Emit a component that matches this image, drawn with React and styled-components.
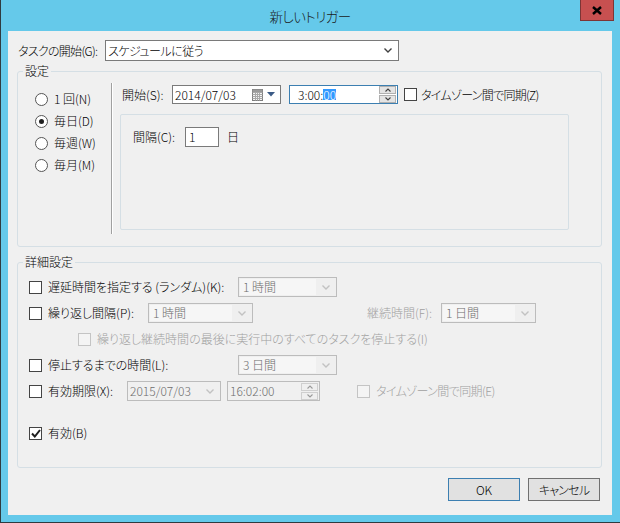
import React from "react";
import styled, { createGlobalStyle } from "styled-components";

const GlobalStyle = createGlobalStyle`
  html, body {
    margin: 0;
    padding: 0;
    background: #ffffff;
  }
  body {
    font-family: "Noto Sans CJK JP", "Noto Sans", sans-serif;
    font-size: 12px;
    font-weight: 300;
    font-feature-settings: "palt";
    color: #000;
  }
  * {
    box-sizing: border-box;
  }
`;

const Window = styled.div`
  width: 620px;
  height: 523px;
  display: flex;
  flex-direction: column;
  background: #65c9ea;
  border-left: 1px solid #2f3b40;
  border-bottom: 1px solid #2f3b40;
  padding: 0 8px 7px 7px;
`;

const TitleBar = styled.div`
  height: 31px;
  flex: none;
  display: grid;
  grid-template-columns: 1fr auto 1fr;
  align-items: start;
`;

const Title = styled.div`
  grid-column: 2;
  padding-top: 7px;
  line-height: 18px;
  font-size: 13.5px;
  letter-spacing: -0.6px;
  color: #1a1a1a;
`;

const CloseButton = styled.div`
  grid-column: 3;
  justify-self: end;
  margin-right: -2px;
  width: 34px;
  height: 21px;
  background: #c75050;
  border: 1px solid #7d3535;
  border-top: none;
  display: flex;
  align-items: center;
  justify-content: center;
`;

const Client = styled.div`
  flex: 1;
  background: #f0f0f0;
  display: flex;
  flex-direction: column;
  padding: 9px 10px 0 9px;
`;

const TaskRow = styled.div`
  display: flex;
  align-items: center;
  height: 21px;
  padding-left: 1px;
`;

const Label = styled.span`
  flex: none;
  width: ${(p) => (p.$w ? `${p.$w}px` : "auto")};
  margin-left: ${(p) => p.$ml || 0}px;
  padding-right: ${(p) => p.$pr || 0}px;
  text-align: ${(p) => (p.$right ? "right" : "left")};
  color: ${(p) => (p.$muted ? "#a0a0a0" : "#000")};
  letter-spacing: ${(p) => p.$ls || 0}px;
  line-height: 14px;
  white-space: nowrap;
`;

const Combo = styled.div`
  flex: none;
  width: ${(p) => p.$w}px;
  height: ${(p) => p.$h || 20}px;
  margin-left: ${(p) => p.$ml || 0}px;
  border: 1px solid ${(p) => (p.$disabled ? "#bcbcbc" : "#7a7a7a")};
  background: ${(p) => (p.$disabled ? "#efefef" : "#ffffff")};
  color: ${(p) => (p.$disabled ? "#6d6d6d" : "#000")};
  display: flex;
  align-items: stretch;
  padding: 1px;
`;

const ComboText = styled.span`
  flex: 1;
  display: flex;
  align-items: center;
  padding-left: ${(p) => p.$pl || 3}px;
  background: ${(p) => (p.$disabled ? "#f6f6f6" : "transparent")};
  letter-spacing: ${(p) => p.$ls || 0}px;
  line-height: 14px;
  white-space: nowrap;
`;

const ComboArrow = styled.span`
  flex: none;
  width: 19px;
  display: flex;
  align-items: center;
  justify-content: center;
`;

const GroupBox = styled.fieldset`
  margin: ${(p) => p.$mt || 0}px 0 0 0;
  padding: 0;
  border: 1px solid #d5dfe5;
  border-radius: 3px;
  min-width: 0;
`;

const Legend = styled.legend`
  margin-left: 5px;
  padding: 0 2px;
  line-height: 14px;
  font-size: 12px;
`;

const SettingsBody = styled.div`
  display: flex;
  align-items: flex-start;
  padding: 5px 0 12px 17px;
`;

const RadioColumn = styled.div`
  width: 76px;
  margin-top: 5px;
  display: flex;
  flex-direction: column;
`;

const RadioRow = styled.div`
  height: 22px;
  display: flex;
  align-items: center;
  gap: 6px;
`;

const RadioCircle = styled.span`
  width: 13px;
  height: 13px;
  border-radius: 50%;
  border: 1px solid #555;
  background: #fff;
  display: flex;
  align-items: center;
  justify-content: center;
  &::after {
    content: "";
    display: ${(p) => (p.$checked ? "block" : "none")};
    width: 5px;
    height: 5px;
    border-radius: 50%;
    background: #1f1f1f;
  }
`;

const Separator = styled.div`
  flex: none;
  width: 2px;
  height: 151px;
  border-left: 1px solid #a0a0a0;
  border-right: 1px solid #ffffff;
`;

const RightPane = styled.div`
  margin-left: 7px;
  margin-top: 2px;
  display: flex;
  flex-direction: column;
`;

const StartLine = styled.div`
  height: 19px;
  margin-left: 2px;
  display: flex;
  align-items: center;
`;

const PickerBox = styled.div`
  flex: none;
  width: ${(p) => p.$w}px;
  height: ${(p) => p.$h || 19}px;
  margin-left: ${(p) => p.$ml || 0}px;
  border: 1px solid
    ${(p) => (p.$focus ? "#3c7fb1" : p.$disabled ? "#bcbcbc" : "#7a7a7a")};
  background: ${(p) => (p.$disabled ? "#f0f0f0" : "#ffffff")};
  color: ${(p) => (p.$disabled ? "#6d6d6d" : "#000")};
  display: flex;
  align-items: center;
  padding: 0 1px 0 ${(p) => p.$pl || 2}px;
  line-height: 14px;
`;

const PickerText = styled.span`
  flex: 1;
  white-space: nowrap;
`;

const Selected = styled.span`
  background: #3399ff;
  color: #fff;
  display: inline-block;
  line-height: 11px;
`;

const Spinner = styled.div`
  flex: none;
  width: 17px;
  display: flex;
  flex-direction: column;
  gap: 1px;
`;

const SpinButton = styled.span`
  height: 8px;
  background: ${(p) => (p.$disabled ? "#efefef" : "#e4e4e4")};
  border: 1px solid ${(p) => (p.$disabled ? "#cfcfcf" : "#b0b0b0")};
  display: flex;
  align-items: center;
  justify-content: center;
`;

const CheckBox = styled.span`
  flex: none;
  width: 13px;
  height: 13px;
  margin-left: ${(p) => p.$ml || 0}px;
  border: 1px solid ${(p) => (p.$disabled ? "#c4c4c4" : "#444")};
  background: ${(p) => (p.$disabled ? "#f4f4f4" : "#fff")};
  display: flex;
  align-items: center;
  justify-content: center;
`;

const InnerPanel = styled.div`
  margin-top: 10px;
  width: 449px;
  height: 116px;
  border: 1px solid #d5dfe5;
  border-radius: 2px;
  padding: 12px 0 0 12px;
`;

const IntervalRow = styled.div`
  height: 20px;
  display: flex;
  align-items: center;
`;

const NumberInput = styled.div`
  width: 34px;
  height: 20px;
  border: 1px solid #7a7a7a;
  background: #fff;
  padding-left: 3px;
  display: flex;
  align-items: center;
  line-height: 14px;
`;

const DetailBody = styled.div`
  display: flex;
  flex-direction: column;
  padding: 5px 0 21px 11px;
`;

const Row = styled.div`
  height: 26px;
  display: flex;
  align-items: center;
  padding-left: ${(p) => p.$indent || 0}px;
  margin-top: ${(p) => p.$mt || 0}px;
`;

const ButtonRow = styled.div`
  margin-top: 10px;
  display: flex;
  justify-content: flex-end;
  gap: 8px;
  padding-right: 2px;
`;

const Button = styled.div`
  width: 72px;
  height: 23px;
  background: #e1e1e1;
  border: 1px solid ${(p) => (p.$default ? "#3c7fb1" : "#707070")};
  display: flex;
  align-items: center;
  justify-content: center;
  letter-spacing: ${(p) => p.$ls || 0}px;
  line-height: 14px;
`;

const CloseGlyph = () => (
  <svg width="10" height="9" viewBox="0 0 10 9">
    <path d="M1 1 L9 8 M9 1 L1 8" stroke="#000" strokeWidth="2.4" />
  </svg>
);

const ChevronDown = ({ color = "#404040" }) => (
  <svg width="8" height="5" viewBox="0 0 8 5">
    <polyline points="0.5,0.5 4,4 7.5,0.5" fill="none" stroke={color} strokeWidth="1.4" />
  </svg>
);

const SmallChevron = ({ up, color = "#404040" }) => (
  <svg width="6" height="4" viewBox="0 0 6 4">
    <polyline
      points={up ? "0.5,3.5 3,1 5.5,3.5" : "0.5,0.5 3,3 5.5,0.5"}
      fill="none"
      stroke={color}
      strokeWidth="1.1"
    />
  </svg>
);

const CalendarIcon = () => (
  <svg width="11" height="12" viewBox="0 0 11 12" style={{ marginRight: 2 }}>
    <rect x="0.5" y="0.5" width="10" height="11" fill="#f4f4f4" stroke="#7d7d7d" />
    <path
      d="M0.5 3.5 H10.5 M0.5 5.5 H10.5 M0.5 7.5 H10.5 M0.5 9.5 H10.5 M3.5 3 V11.5 M5.5 3 V11.5 M7.5 3 V11.5"
      stroke="#a8a8a8"
      strokeWidth="1"
    />
    <rect x="0.5" y="0.5" width="10" height="2.5" fill="#9a9a9a" />
  </svg>
);

const DropTriangle = () => (
  <svg width="8" height="5" viewBox="0 0 8 5" style={{ margin: "0 4px 0 2px" }}>
    <polygon points="0,0 8,0 4,4.5" fill="#3b5b86" />
  </svg>
);

const CheckMark = () => (
  <svg width="10" height="9" viewBox="0 0 10 9">
    <polyline points="1,4.5 3.8,7.5 9,1" fill="none" stroke="#1e1e1e" strokeWidth="2" />
  </svg>
);

const Check = ({ checked, disabled, ml }) => (
  <CheckBox $disabled={disabled} $ml={ml}>
    {checked && <CheckMark />}
  </CheckBox>
);

const Dropdown = ({ w, h, ml, disabled, children, pl, ls }) => (
  <Combo $w={w} $h={h} $ml={ml} $disabled={disabled}>
    <ComboText $disabled={disabled} $pl={pl} $ls={ls}>
      {children}
    </ComboText>
    <ComboArrow>
      <ChevronDown color={disabled ? "#c2c2c2" : "#404040"} />
    </ComboArrow>
  </Combo>
);

const Spin = ({ disabled }) => (
  <Spinner>
    <SpinButton $disabled={disabled}>
      <SmallChevron up color={disabled ? "#9a9a9a" : "#404040"} />
    </SpinButton>
    <SpinButton $disabled={disabled}>
      <SmallChevron color={disabled ? "#9a9a9a" : "#404040"} />
    </SpinButton>
  </Spinner>
);

const radios = [
  { label: "1 回(N)", checked: false },
  { label: "毎日(D)", checked: true },
  { label: "毎週(W)", checked: false },
  { label: "毎月(M)", checked: false },
];

export default function App() {
  return (
    <>
      <GlobalStyle />
      <Window>
        <TitleBar>
          <Title>新しいトリガー</Title>
          <CloseButton>
            <CloseGlyph />
          </CloseButton>
        </TitleBar>
        <Client>
          <TaskRow>
            <Label $w={87} $ls={-0.7}>
              タスクの開始(G):
            </Label>
            <Dropdown w={294} h={21} pl={1} ls={-0.5}>
              スケジュールに従う
            </Dropdown>
          </TaskRow>

          <GroupBox $mt={3}>
            <Legend>設定</Legend>
            <SettingsBody>
              <RadioColumn>
                {radios.map((r) => (
                  <RadioRow key={r.label}>
                    <RadioCircle $checked={r.checked} />
                    <Label>{r.label}</Label>
                  </RadioRow>
                ))}
              </RadioColumn>
              <Separator />
              <RightPane>
                <StartLine>
                  <Label $w={50}>開始(S):</Label>
                  <PickerBox $w={109}>
                    <PickerText>2014/07/03</PickerText>
                    <CalendarIcon />
                    <DropTriangle />
                  </PickerBox>
                  <PickerBox $w={109} $ml={8} $focus $pl={8}>
                    <PickerText>
                      3:00:<Selected>00</Selected>
                    </PickerText>
                    <Spin />
                  </PickerBox>
                  <Check ml={6} />
                  <Label $ml={4} $ls={-0.7}>
                    タイムゾーン間で同期(Z)
                  </Label>
                </StartLine>
                <InnerPanel>
                  <IntervalRow>
                    <Label $w={52}>間隔(C):</Label>
                    <NumberInput>1</NumberInput>
                    <Label $ml={8}>日</Label>
                  </IntervalRow>
                </InnerPanel>
              </RightPane>
            </SettingsBody>
          </GroupBox>

          <GroupBox $mt={8}>
            <Legend>詳細設定</Legend>
            <DetailBody>
              <Row>
                <Check />
                <Label $ml={6} $w={190}>
                  遅延時間を指定する (ランダム)(K):
                </Label>
                <Dropdown w={99} disabled>
                  1 時間
                </Dropdown>
              </Row>
              <Row>
                <Check />
                <Label $ml={6} $w={100}>
                  繰り返し間隔(P):
                </Label>
                <Dropdown w={105} disabled>
                  1 時間
                </Dropdown>
                <Label $w={188} $pr={9} $right $muted>
                  継続時間(F):
                </Label>
                <Dropdown w={95} disabled>
                  1 日間
                </Dropdown>
              </Row>
              <Row $indent={49}>
                <Check disabled />
                <Label $ml={6} $muted>
                  繰り返し継続時間の最後に実行中のすべてのタスクを停止する(I)
                </Label>
              </Row>
              <Row>
                <Check />
                <Label $ml={6} $w={190}>
                  停止するまでの時間(L):
                </Label>
                <Dropdown w={99} disabled>
                  3 日間
                </Dropdown>
              </Row>
              <Row>
                <Check />
                <Label $ml={6} $w={79}>
                  有効期限(X):
                </Label>
                <PickerBox $w={94} $h={20} $disabled>
                  <PickerText>2015/07/03</PickerText>
                  <ComboArrow>
                    <ChevronDown color="#c2c2c2" />
                  </ComboArrow>
                </PickerBox>
                <PickerBox $w={93} $h={20} $ml={6} $disabled>
                  <PickerText>16:02:00</PickerText>
                  <Spin disabled />
                </PickerBox>
                <Check disabled ml={37} />
                <Label $ml={6} $muted $ls={-0.6}>
                  タイムゾーン間で同期(E)
                </Label>
              </Row>
              <Row $mt={16}>
                <Check checked />
                <Label $ml={6}>有効(B)</Label>
              </Row>
            </DetailBody>
          </GroupBox>

          <ButtonRow>
            <Button $default>OK</Button>
            <Button $ls={-0.8}>キャンセル</Button>
          </ButtonRow>
        </Client>
      </Window>
    </>
  );
}
